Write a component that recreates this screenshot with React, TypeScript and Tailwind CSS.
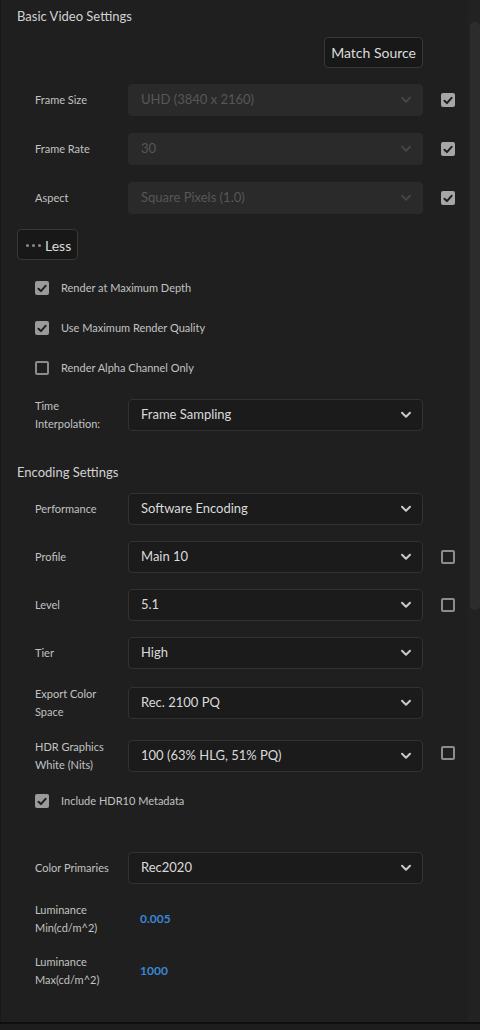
import React from "react";

const FONT = { fontFamily: "Lato, 'Noto Sans', sans-serif" };

function Chevron({ disabled }: { disabled?: boolean }) {
  return (
    <svg width="12" height="8" viewBox="0 0 12 8" className="shrink-0">
      <path
        d="M2 1.8l4 4 4-4"
        stroke={disabled ? "#454545" : "#c9c9c9"}
        strokeWidth="2"
        fill="none"
        strokeLinecap="round"
        strokeLinejoin="round"
      />
    </svg>
  );
}

function Check({ checked, dim }: { checked?: boolean; dim?: boolean }) {
  if (checked) {
    return (
      <div
        className={`w-[14px] h-[14px] rounded-[2px] flex items-center justify-center shrink-0 ${
          dim ? "bg-[#9a9a9a]" : "bg-[#a6a6a6]"
        }`}
      >
        <svg width="10" height="9" viewBox="0 0 10 9">
          <path
            d="M1.5 4.8l2.4 2.3L8.6 1.8"
            stroke="#1e1e1e"
            strokeWidth="2"
            fill="none"
            strokeLinecap="round"
            strokeLinejoin="round"
          />
        </svg>
      </div>
    );
  }
  return <div className="w-[14px] h-[14px] rounded-[2px] border-2 border-[#8c8c8c] shrink-0" />;
}

function Select({ value, disabled }: { value: string; disabled?: boolean }) {
  return (
    <div
      className={`w-[295px] h-[32px] rounded-[4px] flex items-center justify-between shrink-0 ${
        disabled
          ? "bg-[#2a2a2a] text-[#575757] pl-[13px] pr-[11px]"
          : "bg-[#1b1b1b] border border-[#323232] text-[#dadada] pl-[12px] pr-[10px]"
      } text-[13px]`}
    >
      <span>{value}</span>
      <Chevron disabled={disabled} />
    </div>
  );
}

function Row({
  label,
  value,
  disabled,
  check,
}: {
  label: React.ReactNode;
  value: string;
  disabled?: boolean;
  check?: "on" | "off";
}) {
  return (
    <div className="flex items-center h-[32px]">
      <div className="w-[111px] pl-[18px] text-[11px] leading-[18px] text-[#c2c2c2] shrink-0">{label}</div>
      <Select value={value} disabled={disabled} />
      {check && (
        <div className="ml-[18px]">
          <Check checked={check === "on"} />
        </div>
      )}
    </div>
  );
}

function CheckRow({ label, checked }: { label: string; checked?: boolean }) {
  return (
    <div className="flex items-center h-[20px] pl-[18px]">
      <Check checked={checked} dim />
      <span className="ml-[12px] text-[11px] text-[#c2c2c2]">{label}</span>
    </div>
  );
}

export default function App() {
  return (
    <div style={FONT} className="w-[480px] h-[1030px] bg-[#1d1d1d] flex flex-col overflow-hidden">
      <div className="flex h-[1022px] bg-[#1f1f1f] border-l border-[#191919]">
        <div className="flex-1 pl-[16px] pt-[8px]">
          <div className="text-[13px] leading-[16px] text-[#d2d2d2]">Basic Video Settings</div>

          <div className="w-[406px] flex justify-end mt-[13px]">
            <div className="h-[31px] px-[6px] rounded-[4px] border border-[#383838] bg-[#181818] text-[14px] text-[#dcdcdc] flex items-center">
              Match Source
            </div>
          </div>

          <div className="mt-[16px] flex flex-col gap-[17px]">
            <Row label="Frame Size" value="UHD (3840 x 2160)" disabled check="on" />
            <Row label="Frame Rate" value="30" disabled check="on" />
            <Row label="Aspect" value="Square Pixels (1.0)" disabled check="on" />
          </div>

          <div className="mt-[15px] w-[61px] h-[31px] rounded-[4px] border border-[#383838] bg-[#181818] flex items-center pl-[8px]">
            <div className="flex gap-[3px] mt-[1px]">
              <span className="w-[3px] h-[3px] rounded-full bg-[#8a8a8a]" />
              <span className="w-[3px] h-[3px] rounded-full bg-[#8a8a8a]" />
              <span className="w-[3px] h-[3px] rounded-full bg-[#8a8a8a]" />
            </div>
            <span className="ml-[4px] text-[14px] text-[#dcdcdc] mt-[1px]">Less</span>
          </div>

          <div className="mt-[18px] flex flex-col gap-[20px]">
            <CheckRow label="Render at Maximum Depth" checked />
            <CheckRow label="Use Maximum Render Quality" checked />
            <CheckRow label="Render Alpha Channel Only" />
          </div>

          <div className="mt-[21px]">
            <Row
              label={
                <>
                  Time
                  <br />
                  Interpolation:
                </>
              }
              value="Frame Sampling"
            />
          </div>

          <div className="mt-[33px] text-[13px] leading-[16px] text-[#d2d2d2]">Encoding Settings</div>

          <div className="mt-[13px] flex flex-col gap-[16px]">
            <Row label="Performance" value="Software Encoding" />
            <Row label="Profile" value="Main 10" check="off" />
            <Row label="Level" value="5.1" check="off" />
            <Row label="Tier" value="High" />
          </div>
          <div className="mt-[18px]">
            <Row
              label={
                <>
                  Export Color
                  <br />
                  Space
                </>
              }
              value="Rec. 2100 PQ"
            />
          </div>
          <div className="mt-[21px] flex items-start">
            <Row
              label={
                <>
                  HDR Graphics
                  <br />
                  White (Nits)
                </>
              }
              value="100 (63% HLG, 51% PQ)"
            />
            <div className="ml-[18px] mt-[6px]">
              <Check />
            </div>
          </div>
          <div className="mt-[19px]">
            <CheckRow label="Include HDR10 Metadata" checked />
          </div>

          <div className="mt-[41px]">
            <Row label="Color Primaries" value="Rec2020" />
          </div>

          <div className="mt-[17px] flex items-center h-[36px]">
            <div className="w-[111px] pl-[18px] text-[11px] leading-[18px] text-[#c2c2c2]">
              Luminance
              <br />
              Min(cd/m^2)
            </div>
            <span className="ml-[12px] text-[12px] font-bold text-[#3a86d6]">0.005</span>
          </div>
          <div className="mt-[16px] flex items-center h-[36px]">
            <div className="w-[111px] pl-[18px] text-[11px] leading-[18px] text-[#c2c2c2]">
              Luminance
              <br />
              Max(cd/m^2)
            </div>
            <span className="ml-[12px] text-[12px] font-bold text-[#3a86d6]">1000</span>
          </div>
        </div>

        <div className="w-[12px] bg-[#222222] shrink-0 pl-[2px]">
          <div className="mt-[22px] h-[588px] w-[10px] rounded-[5px] bg-[#2c2c2c]" />
        </div>
      </div>
      <div className="h-[2px] bg-[#0e0e0e]" />
    </div>
  );
}
